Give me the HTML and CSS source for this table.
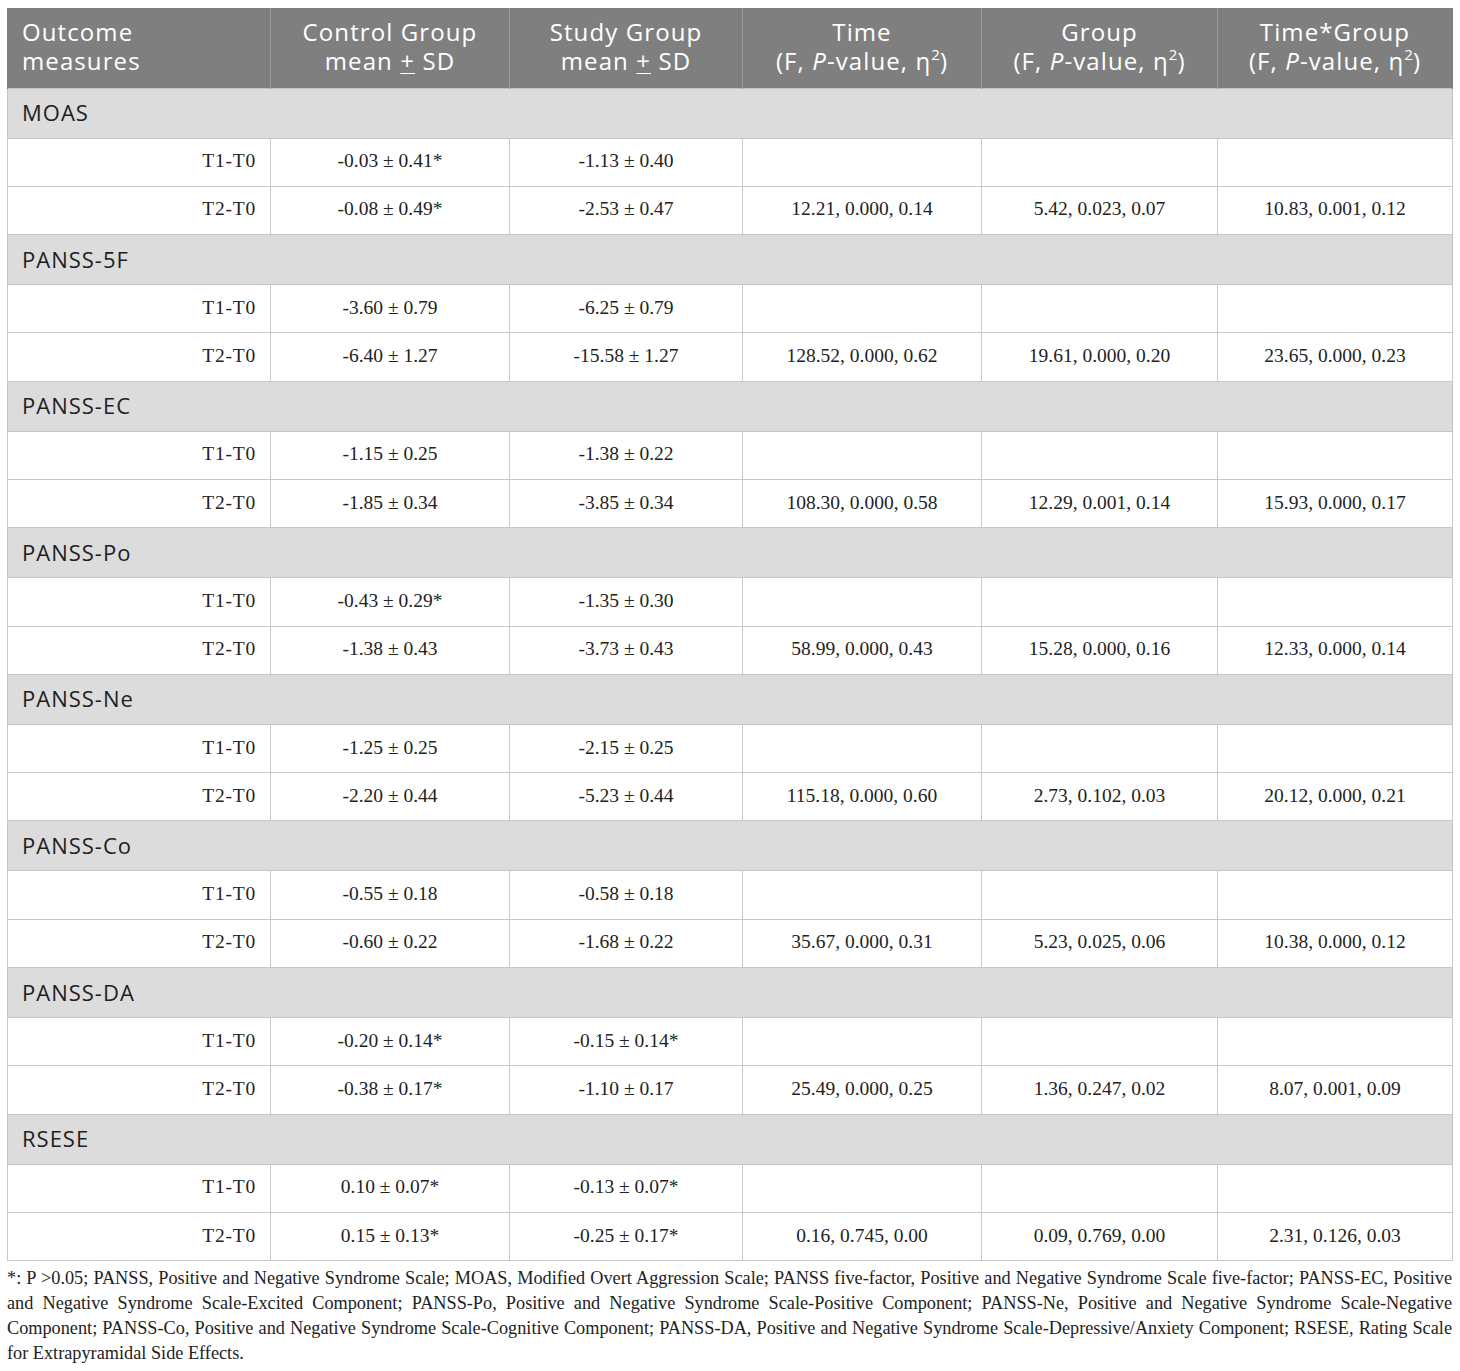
FILE: index.html
```html
<!DOCTYPE html>
<html>
<head>
<meta charset="utf-8">
<link rel="stylesheet" href="styles.css">
</head>
<body>
<div class="wrap">
<table class="tbl">
<colgroup>
<col class="c1"><col class="c2"><col class="c3"><col class="c4"><col class="c5"><col class="c6">
</colgroup>
<thead>
<tr class="hd">
<th class="left">Outcome<br>measures</th>
<th>Control Group<br>mean <u>+</u> SD</th>
<th>Study Group<br>mean <u>+</u> SD</th>
<th>Time<br>(F, <i>P</i>-value, η<sup>2</sup>)</th>
<th>Group<br>(F, <i>P</i>-value, η<sup>2</sup>)</th>
<th>Time*Group<br>(F, <i>P</i>-value, η<sup>2</sup>)</th>
</tr>
</thead>
<tbody>
<tr class="sec"><td colspan="6">MOAS</td></tr>
<tr class="row"><td class="lbl">T1-T0</td><td>-0.03 ± 0.41*</td><td>-1.13 ± 0.40</td><td></td><td></td><td></td></tr>
<tr class="row"><td class="lbl">T2-T0</td><td>-0.08 ± 0.49*</td><td>-2.53 ± 0.47</td><td>12.21, 0.000, 0.14</td><td>5.42, 0.023, 0.07</td><td>10.83, 0.001, 0.12</td></tr>
<tr class="sec"><td colspan="6">PANSS-5F</td></tr>
<tr class="row"><td class="lbl">T1-T0</td><td>-3.60 ± 0.79</td><td>-6.25 ± 0.79</td><td></td><td></td><td></td></tr>
<tr class="row"><td class="lbl">T2-T0</td><td>-6.40 ± 1.27</td><td>-15.58 ± 1.27</td><td>128.52, 0.000, 0.62</td><td>19.61, 0.000, 0.20</td><td>23.65, 0.000, 0.23</td></tr>
<tr class="sec"><td colspan="6">PANSS-EC</td></tr>
<tr class="row"><td class="lbl">T1-T0</td><td>-1.15 ± 0.25</td><td>-1.38 ± 0.22</td><td></td><td></td><td></td></tr>
<tr class="row"><td class="lbl">T2-T0</td><td>-1.85 ± 0.34</td><td>-3.85 ± 0.34</td><td>108.30, 0.000, 0.58</td><td>12.29, 0.001, 0.14</td><td>15.93, 0.000, 0.17</td></tr>
<tr class="sec"><td colspan="6">PANSS-Po</td></tr>
<tr class="row"><td class="lbl">T1-T0</td><td>-0.43 ± 0.29*</td><td>-1.35 ± 0.30</td><td></td><td></td><td></td></tr>
<tr class="row"><td class="lbl">T2-T0</td><td>-1.38 ± 0.43</td><td>-3.73 ± 0.43</td><td>58.99, 0.000, 0.43</td><td>15.28, 0.000, 0.16</td><td>12.33, 0.000, 0.14</td></tr>
<tr class="sec"><td colspan="6">PANSS-Ne</td></tr>
<tr class="row"><td class="lbl">T1-T0</td><td>-1.25 ± 0.25</td><td>-2.15 ± 0.25</td><td></td><td></td><td></td></tr>
<tr class="row"><td class="lbl">T2-T0</td><td>-2.20 ± 0.44</td><td>-5.23 ± 0.44</td><td>115.18, 0.000, 0.60</td><td>2.73, 0.102, 0.03</td><td>20.12, 0.000, 0.21</td></tr>
<tr class="sec"><td colspan="6">PANSS-Co</td></tr>
<tr class="row"><td class="lbl">T1-T0</td><td>-0.55 ± 0.18</td><td>-0.58 ± 0.18</td><td></td><td></td><td></td></tr>
<tr class="row"><td class="lbl">T2-T0</td><td>-0.60 ± 0.22</td><td>-1.68 ± 0.22</td><td>35.67, 0.000, 0.31</td><td>5.23, 0.025, 0.06</td><td>10.38, 0.000, 0.12</td></tr>
<tr class="sec"><td colspan="6">PANSS-DA</td></tr>
<tr class="row"><td class="lbl">T1-T0</td><td>-0.20 ± 0.14*</td><td>-0.15 ± 0.14*</td><td></td><td></td><td></td></tr>
<tr class="row"><td class="lbl">T2-T0</td><td>-0.38 ± 0.17*</td><td>-1.10 ± 0.17</td><td>25.49, 0.000, 0.25</td><td>1.36, 0.247, 0.02</td><td>8.07, 0.001, 0.09</td></tr>
<tr class="sec"><td colspan="6">RSESE</td></tr>
<tr class="row"><td class="lbl">T1-T0</td><td>0.10 ± 0.07*</td><td>-0.13 ± 0.07*</td><td></td><td></td><td></td></tr>
<tr class="row"><td class="lbl">T2-T0</td><td>0.15 ± 0.13*</td><td>-0.25 ± 0.17*</td><td>0.16, 0.745, 0.00</td><td>0.09, 0.769, 0.00</td><td>2.31, 0.126, 0.03</td></tr>
</tbody>
</table>
<p class="note">*: P &gt;0.05; PANSS, Positive and Negative Syndrome Scale; MOAS, Modified Overt Aggression Scale; PANSS five-factor, Positive and Negative Syndrome Scale five-factor; PANSS-EC, Positive and Negative Syndrome Scale-Excited Component; PANSS-Po, Positive and Negative Syndrome Scale-Positive Component; PANSS-Ne, Positive and Negative Syndrome Scale-Negative Component; PANSS-Co, Positive and Negative Syndrome Scale-Cognitive Component; PANSS-DA, Positive and Negative Syndrome Scale-Depressive/Anxiety Component; RSESE, Rating Scale for Extrapyramidal Side Effects.</p>
</div>
</body>
</html>
```

FILE: styles.css
```css
html, body {
  margin: 0;
  padding: 0;
  background: #ffffff;
}
.wrap {
  padding: 8px 8px 0 7px;
  width: 1445px;
}
.tbl {
  width: 1445px;
  border-collapse: collapse;
  table-layout: fixed;
  font-family: "Liberation Serif", "Times New Roman", serif;
  color: #222;
}
.c1 { width: 263px; }
.c2 { width: 239px; }
.c3 { width: 233px; }
.c4 { width: 239px; }
.c5 { width: 236px; }
.c6 { width: 235px; }
.hd th {
  background: #7f7f7f;
  color: #ffffff;
  font-family: "Open Sans", "Noto Sans", sans-serif;
  font-weight: 400;
  font-size: 24px;
  letter-spacing: 1.1px;
  line-height: 29px;
  height: 80px;
  box-sizing: border-box;
  padding: 0 10px 4px;
  text-align: center;
  vertical-align: middle;
  border-left: 1px solid #9a9a9a;
  border-right: 1px solid #9a9a9a;
}
.hd th.left {
  text-align: left;
  padding-left: 14px;
  border-left: 1px solid #7f7f7f;
}
.hd th:last-child { border-right: 1px solid #7f7f7f; }
.hd u {
  text-decoration: underline;
  text-underline-offset: 3px;
  text-decoration-thickness: 1px;
}
.hd sup {
  font-size: 15px;
  line-height: 0;
  vertical-align: 10px;
  letter-spacing: 0;
}
.sec td {
  background: #dcdcdc;
  font-family: "Open Sans", "Noto Sans", sans-serif;
  font-size: 22px;
  letter-spacing: 1px;
  color: #1e1e1e;
  height: 50px;
  box-sizing: border-box;
  padding: 0 14px 2px;
  vertical-align: middle;
  border: 1px solid #c4c4c4;
}
.row td {
  height: 48.3px;
  box-sizing: border-box;
  padding: 0 14px 2px;
  font-size: 19.5px;
  text-align: center;
  vertical-align: middle;
  border: 1px solid #c8c8c8;
}
.row td.lbl {
  text-align: right;
  letter-spacing: 0.8px;
}
.note {
  margin: 5px 0 0 0;
  font-family: "Liberation Serif", "Times New Roman", serif;
  font-size: 18.25px;
  line-height: 25px;
  color: #222;
  text-align: justify;
}
```
